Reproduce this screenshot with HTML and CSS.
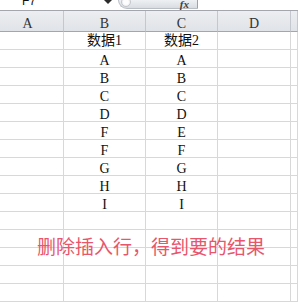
FILE: index.html
```html
<!DOCTYPE html>
<html lang="zh">
<head>
    <meta charset="utf-8" />
    <title>删除插入行</title>
    <link rel="stylesheet" href="styles.css">
</head>
<body>
    <div class="sheet">
        <div class="formula-bar">
            <div class="name-box"><span>F7</span></div>
            <svg class="arrow" width="8" height="4" viewBox="0 0 8 4"><polygon points="0,0 8,0 4,4" fill="#2b2b2b"/></svg>
            <div class="grip">
                <span class="knob"></span>
                <span class="fx">fx</span>
            </div>
            <div class="formula-input"></div>
        </div>

        <div class="grid">
            <div class="head first">A</div>
            <div class="head">B</div>
            <div class="head">C</div>
            <div class="head">D</div>
            <div class="head"></div>
        </div>

        <div class="grid" id="rows"></div>

        <div class="note">删除插入行，得到要的结果</div>
    </div>

    <script>
        const colB = ['数据1', 'A', 'B', 'C', 'D', 'F', 'F', 'G', 'H', 'I'];
        const colC = ['数据2', 'A', 'B', 'C', 'D', 'E', 'F', 'G', 'H', 'I'];
        const rows = document.getElementById('rows');

        for (let i = 0; i < 15; i++) {
            const values = ['', colB[i] || '', colC[i] || '', '', ''];
            values.forEach(v => {
                const cell = document.createElement('div');
                cell.className = i === 0 ? 'cell title' : 'cell';
                cell.textContent = v;
                rows.appendChild(cell);
            });
        }
    </script>
</body>
</html>
```

FILE: styles.css
```css
body {
    margin: 0;
    background-color: #fff;
    overflow: hidden;
}
.sheet {
    position: relative;
    width: 298px;
    height: 304px;
    overflow: hidden;
    font-family: "Liberation Serif", "Noto Sans CJK SC", serif;
    font-size: 14px;
    color: #111;
}
.formula-bar {
    display: flex;
    height: 10px;
    border-bottom: 1px solid #a3a7ad;
    overflow: hidden;
}
.name-box {
    width: 82px;
    padding-left: 22px;
    font-family: "Liberation Sans", sans-serif;
    font-size: 12px;
    line-height: 12px;
}
.name-box span {
    display: block;
    margin-top: -5px;
}
.arrow {
    display: block;
    margin-right: 6px;
}
.grip {
    display: flex;
    justify-content: space-between;
    width: 76px;
    height: 8px;
    padding-left: 2px;
    border-bottom: 1px solid #b9bec5;
    border-left: 1px solid #b9bec5;
    border-bottom-left-radius: 9px;
    border-right: 1px solid #9da2a8;
    background: linear-gradient(#eef0f2, #d9dde2);
}
.knob {
    width: 10px;
    height: 10px;
    margin-top: -3px;
    border-radius: 50%;
    background: radial-gradient(#fdfdfd 40%, #dfe2e6);
    border: 1px solid #c3c7cc;
    box-sizing: border-box;
}
.fx {
    margin-right: 8px;
    font-family: "Liberation Serif", serif;
    font-style: italic;
    font-weight: bold;
    font-size: 11px;
    line-height: 9px;
    color: #404040;
}
.formula-input {
    flex: 1;
}
.grid {
    display: grid;
    grid-template-columns: 64px 82px 72px 73px 1fr;
}
.head {
    height: 21px;
    padding-top: 6px;
    box-sizing: border-box;
    border-right: 1px solid #c4c8ce;
    border-bottom: 1px solid #a3a7ad;
    background: linear-gradient(#eceef1, #e0e3e7);
    text-align: center;
    line-height: 14px;
    color: #333;
}
.head.first {
    padding-right: 8px;
}
#rows {
    grid-auto-rows: 18px;
}
.cell {
    box-sizing: border-box;
    padding-top: 4px;
    border-right: 1px solid #d8d8d8;
    border-bottom: 1px solid #d8d8d8;
    text-align: center;
    line-height: 14px;
    white-space: nowrap;
}
.cell.title {
    padding-top: 2px;
}
.note {
    position: absolute;
    left: 37px;
    top: 235px;
    font-family: "Noto Sans CJK SC", sans-serif;
    font-size: 19px;
    line-height: 22px;
    color: #e8566b;
}
```
